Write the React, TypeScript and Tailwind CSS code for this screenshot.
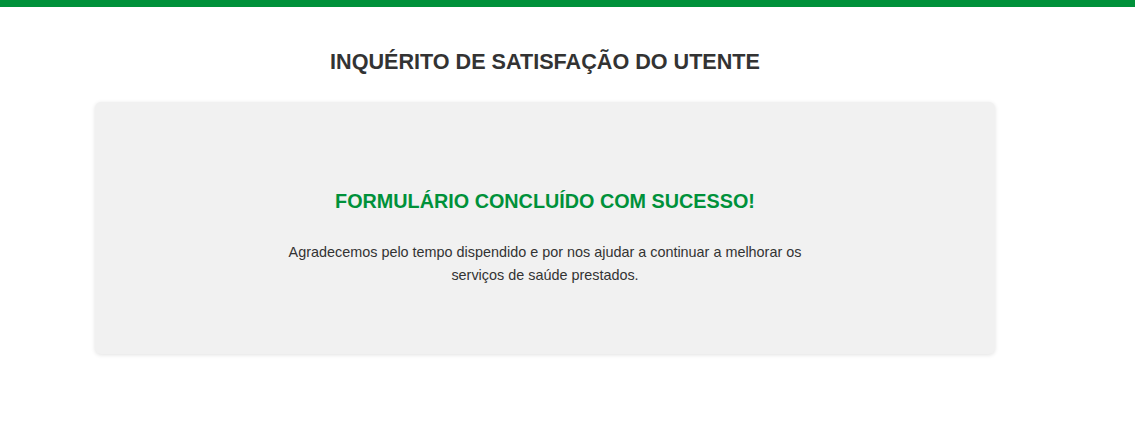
export default function App() {
  return (
    <div className="min-h-[429px] bg-white" style={{ fontFamily: '"Liberation Sans", Arial, sans-serif' }}>
      <div className="h-[7px] bg-[#00913a]" />
      <div className="w-[900px] ml-[95px]">
        <h1 className="mt-[42px] text-center text-[21.6px] font-bold leading-[26px] text-[#333333]">
          INQUÉRITO DE SATISFAÇÃO DO UTENTE
        </h1>
        <div className="mt-[27px] h-[252px] rounded-md bg-[#f1f1f1] shadow-[0_1px_4px_rgba(0,0,0,0.12)] flex flex-col items-center justify-center pb-[4px]">
          <h2 className="text-[19.8px] font-bold leading-[24px] text-[#00913a] mt-[24px]">
            FORMULÁRIO CONCLUÍDO COM SUCESSO!
          </h2>
          <p className="mt-[28px] w-[540px] text-center text-[14.4px] leading-[23px] text-[#333333]">
            Agradecemos pelo tempo dispendido e por nos ajudar a continuar a melhorar os serviços de saúde prestados.
          </p>
        </div>
      </div>
    </div>
  );
}
